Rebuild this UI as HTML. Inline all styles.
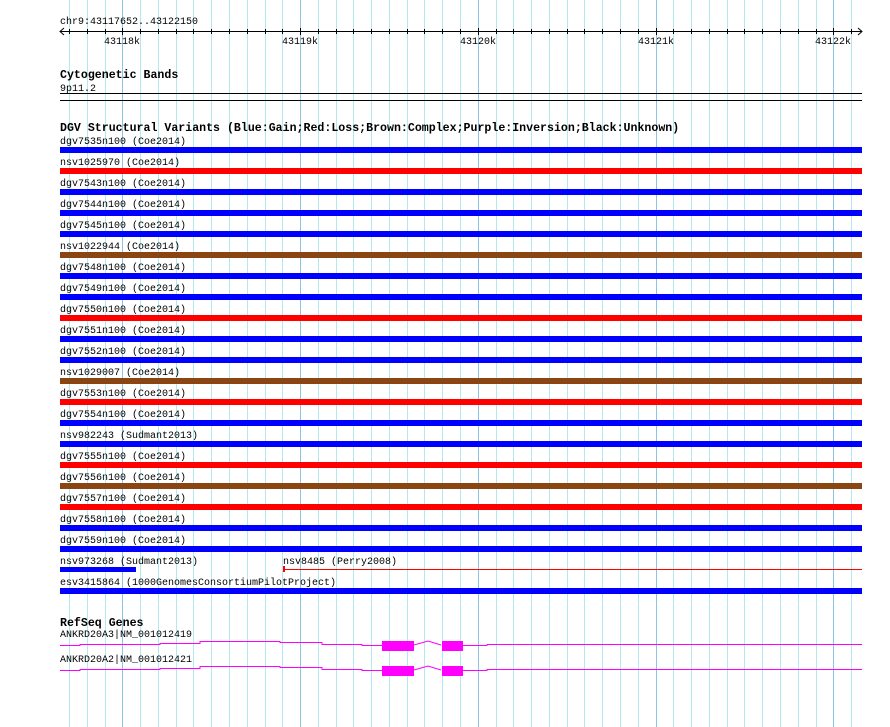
<!DOCTYPE html>
<html><head><style>
html,body{margin:0;padding:0;background:#fff;}
svg{display:block;}
text{font-family:"Liberation Mono",monospace;font-size:10px;fill:#000;}
.b{font-weight:bold;font-size:11.6px;}
</style></head><body>
<svg width="890" height="727" xmlns="http://www.w3.org/2000/svg">
<g id="grid"></g>
<!-- ruler -->
<text x="60" y="24">chr9:43117652..43122150</text>
<line x1="60" y1="31.5" x2="862" y2="31.5" stroke="#000"/>
<path d="M64 28 L60 31.5 L64 35 M858 28 L862 31.5 L858 35" stroke="#000" fill="none"/>
<g id="ticks"></g>
<text x="122" y="44" text-anchor="middle">43118k</text>
<text x="300" y="44" text-anchor="middle">43119k</text>
<text x="478" y="44" text-anchor="middle">43120k</text>
<text x="656" y="44" text-anchor="middle">43121k</text>
<text x="833" y="44" text-anchor="middle">43122k</text>
<text class="b" x="60" y="78">Cytogenetic Bands</text>
<text x="60" y="91">9p11.2</text>
<rect x="60" y="93" width="802" height="1" fill="#000"/>
<rect x="60" y="100" width="802" height="1" fill="#000"/>
<text class="b" x="60" y="131">DGV Structural Variants (Blue:Gain;Red:Loss;Brown:Complex;Purple:Inversion;Black:Unknown)</text>
<g id="rows"></g>
<text x="60" y="564">nsv973268 (Sudmant2013)</text>
<rect x="60" y="567" width="76" height="5" fill="#0000ff"/>
<text x="283" y="564">nsv8485 (Perry2008)</text>
<rect x="283" y="569" width="579" height="1" fill="#ff0000"/>
<rect x="283" y="566" width="2" height="6" fill="#ff0000"/>
<text x="60" y="585">esv3415864 (1000GenomesConsortiumPilotProject)</text>
<rect x="60" y="588" width="802" height="6" fill="#0000ff"/>
<text class="b" x="60" y="626">RefSeq Genes</text>
<text x="60" y="637">ANKRD20A3|NM_001012419</text>
<text x="60" y="662">ANKRD20A2|NM_001012421</text>
<g id="g1" fill="none" stroke="#ff00ff">
<polyline points="60,645.5 80,645.5 80,644.5 160,644.5 160,643.5 200,643.5 200,641.5 280,641.5 280,642.5 322,642.5 322,644.5 362,644.5 362,645.5 382,645.5"/>
<polyline points="414,645 428,641 441,645"/>
<polyline points="463,645.5 487,645.5 487,644.5 862,644.5"/>
</g>
<rect x="382" y="641" width="32" height="10" fill="#ff00ff"/>
<rect x="442" y="641" width="21" height="10" fill="#ff00ff"/>
<g fill="none" stroke="#ff00ff" transform="translate(0,25)">
<polyline points="60,645.5 80,645.5 80,644.5 160,644.5 160,643.5 200,643.5 200,641.5 280,641.5 280,642.5 322,642.5 322,644.5 362,644.5 362,645.5 382,645.5"/>
<polyline points="414,645 428,641 441,645"/>
<polyline points="463,645.5 487,645.5 487,644.5 862,644.5"/>
</g>
<rect x="382" y="666" width="32" height="10" fill="#ff00ff"/>
<rect x="442" y="666" width="21" height="10" fill="#ff00ff"/>
</svg>
<script>
var ns="http://www.w3.org/2000/svg";
var g=document.getElementById("grid"),t=document.getElementById("ticks");
for(var n=-3;n<=41;n++){var x=Math.round(122.3+n*17.775)+0.5;var major=((n%10)+10)%10==0;
var l=document.createElementNS(ns,"line");l.setAttribute("x1",x);l.setAttribute("x2",x);l.setAttribute("y1",0);l.setAttribute("y2",727);l.setAttribute("stroke",major?"#8cc4e4":"#b4e8f0");g.appendChild(l);
var k=document.createElementNS(ns,"line");k.setAttribute("x1",x);k.setAttribute("x2",x);k.setAttribute("y1",major?28:29);k.setAttribute("y2",major?35:34);k.setAttribute("stroke","#000");t.appendChild(k);}
var rows=[["dgv7535n100","Coe2014","b"],["nsv1025970","Coe2014","r"],["dgv7543n100","Coe2014","b"],["dgv7544n100","Coe2014","b"],["dgv7545n100","Coe2014","b"],["nsv1022944","Coe2014","n"],["dgv7548n100","Coe2014","b"],["dgv7549n100","Coe2014","b"],["dgv7550n100","Coe2014","r"],["dgv7551n100","Coe2014","b"],["dgv7552n100","Coe2014","b"],["nsv1029007","Coe2014","n"],["dgv7553n100","Coe2014","r"],["dgv7554n100","Coe2014","b"],["nsv982243","Sudmant2013","b"],["dgv7555n100","Coe2014","r"],["dgv7556n100","Coe2014","n"],["dgv7557n100","Coe2014","r"],["dgv7558n100","Coe2014","b"],["dgv7559n100","Coe2014","b"]];
var col={b:"#0000ff",r:"#ff0000",n:"#8b4513"};var R=document.getElementById("rows");
rows.forEach(function(r,i){var y=147+i*21;var tx=document.createElementNS(ns,"text");tx.setAttribute("x",60);tx.setAttribute("y",y-3);tx.textContent=r[0]+" ("+r[1]+")";R.appendChild(tx);
var rc=document.createElementNS(ns,"rect");rc.setAttribute("x",60);rc.setAttribute("y",y);rc.setAttribute("width",802);rc.setAttribute("height",6);rc.setAttribute("fill",col[r[2]]);R.appendChild(rc);});
</script>
</body></html>
